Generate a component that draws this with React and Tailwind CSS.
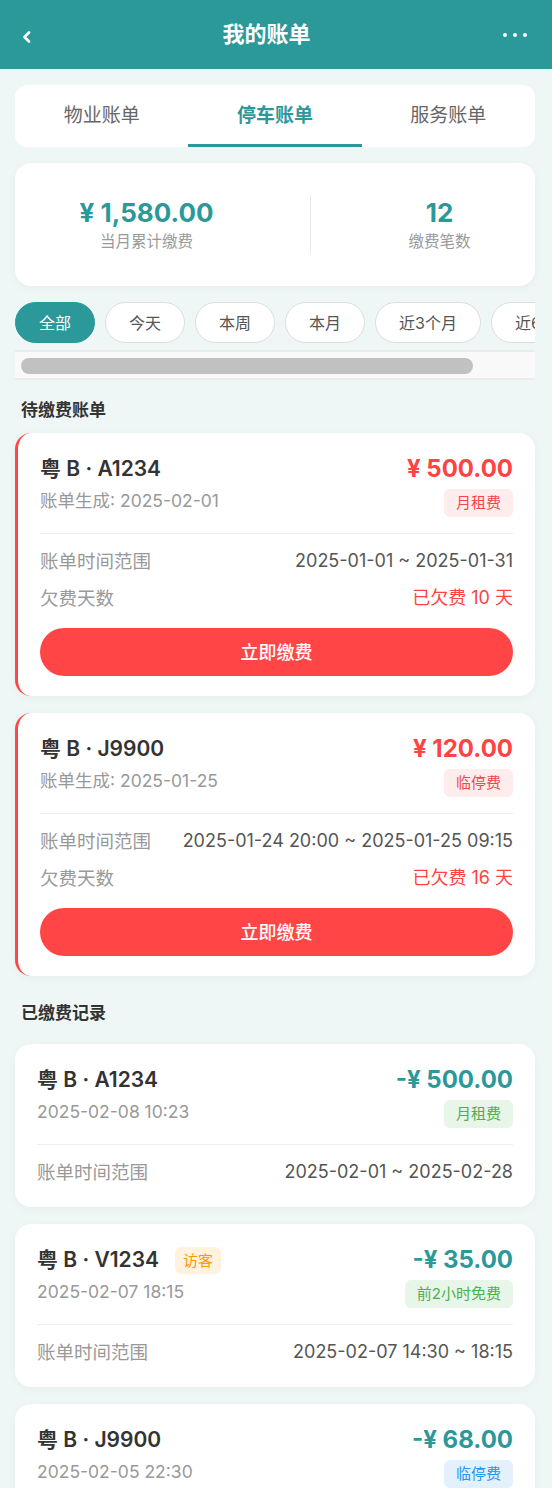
import { useState } from "react";

const tabs = ["物业账单", "停车账单", "服务账单"];
const ranges = ["全部", "今天", "本周", "本月", "近3个月", "近6个月", "近1年"];

const pending = [
    { plate: "粤 B · A1234", gen: "2025-02-01", amount: "¥ 500.00", tag: "月租费", range: "2025-01-01 ~ 2025-01-31", days: 10 },
    { plate: "粤 B · J9900", gen: "2025-01-25", amount: "¥ 120.00", tag: "临停费", range: "2025-01-24 20:00 ~ 2025-01-25 09:15", days: 16 },
];

const paid = [
    { plate: "粤 B · A1234", time: "2025-02-08 10:23", amount: "-¥ 500.00", tag: "月租费", tone: "green", range: "2025-02-01 ~ 2025-02-28" },
    { plate: "粤 B · V1234", visitor: true, time: "2025-02-07 18:15", amount: "-¥ 35.00", tag: "前2小时免费", tone: "green", range: "2025-02-07 14:30 ~ 18:15" },
    { plate: "粤 B · J9900", time: "2025-02-05 22:30", amount: "-¥ 68.00", tag: "临停费", tone: "blue", range: "2025-02-05 18:00 ~ 22:30" },
];

const toneClass = {
    green: "bg-[#e8f5e9] text-[#4caf50]",
    blue: "bg-[#e3f0fd] text-[#2196f3]",
};

function Row({ label, children }) {
    return (
        <div className="flex justify-between items-center leading-[26px] text-[18px] whitespace-nowrap">
            <span className="text-[#999] text-[18.5px]">{label}</span>
            {children}
        </div>
    );
}

function PendingCard({ bill }) {
    return (
        <div className="ml-[15px] mr-[17px] bg-white rounded-2xl border-l-[3px] border-[#ff4545] px-[22px] pt-[22px] pb-[20px] shadow-[0_2px_10px_rgba(0,0,0,0.04)]">
            <div className="flex justify-between items-start">
                <div>
                    <div className="text-[21px] font-semibold leading-[28px] text-[#333]">{bill.plate}</div>
                    <div className="mt-[6px] text-[17.5px] leading-[24px] text-[#999]">账单生成: {bill.gen}</div>
                </div>
                <div className="flex flex-col items-end">
                    <div className="text-[24px] font-bold leading-[28px] text-[#ff4242]">{bill.amount}</div>
                    <div className="mt-[6px] h-[28px] px-3 rounded-md bg-[#ffecec] text-[#f04848] text-[15px] leading-[28px]">{bill.tag}</div>
                </div>
            </div>
            <div className="mt-[16px] h-px bg-[#eeeeee]" />
            <div className="mt-[14px] flex flex-col gap-[11px]">
                <Row label="账单时间范围">
                    <span className="text-[#555]">{bill.range}</span>
                </Row>
                <Row label="欠费天数">
                    <span className="text-[#ff4242]">已欠费 {bill.days} 天</span>
                </Row>
            </div>
            <button className="mt-[17px] w-full h-[48px] rounded-full bg-[#ff4545] text-white text-[18px] font-medium">
                立即缴费
            </button>
        </div>
    );
}

function PaidCard({ bill }) {
    return (
        <div className="ml-[15px] mr-[17px] bg-white rounded-2xl px-[22px] pt-[22px] pb-[22px] shadow-[0_2px_10px_rgba(0,0,0,0.04)]">
            <div className="flex justify-between items-start">
                <div>
                    <div className="flex items-center h-[28px]">
                        <span className="text-[21px] font-semibold leading-[28px] text-[#333]">{bill.plate}</span>
                        {bill.visitor && (
                            <span className="ml-4 h-[27px] px-2 rounded-md bg-[#fff3e0] text-[#ff9800] text-[15px] leading-[27px]">访客</span>
                        )}
                    </div>
                    <div className="mt-[6px] text-[17.5px] leading-[24px] text-[#999]">{bill.time}</div>
                </div>
                <div className="flex flex-col items-end">
                    <div className="text-[24px] font-bold leading-[28px] text-[#2b9999]">{bill.amount}</div>
                    <div className={"mt-[6px] h-[28px] px-3 rounded-md text-[15px] leading-[28px] " + toneClass[bill.tone]}>{bill.tag}</div>
                </div>
            </div>
            <div className="mt-[16px] h-px bg-[#eeeeee]" />
            <div className="mt-[14px]">
                <Row label="账单时间范围">
                    <span className="text-[#555]">{bill.range}</span>
                </Row>
            </div>
        </div>
    );
}

export default function App() {
    const [tab, setTab] = useState(1);
    const [range, setRange] = useState(0);

    return (
        <div className="min-h-screen bg-[#eff7f6] pb-8 font-['Inter','Noto_Sans_CJK_SC',sans-serif]">
            {/* header */}
            <div className="h-[69px] bg-[#2b9999] flex items-center pl-[22px] pr-[25px]">
                <div className="w-[20px] pt-1">
                    <svg width="9" height="12" viewBox="0 0 9 12" fill="none">
                        <path d="M7 1.5L2.5 6L7 10.5" stroke="white" strokeWidth="2.6" strokeLinecap="round" strokeLinejoin="round" />
                    </svg>
                </div>
                <div className="flex-1 text-center text-white text-[22px] font-bold">我的账单</div>
                <div className="w-[36px] flex justify-end gap-[6px]">
                    <span className="w-[4px] h-[4px] rounded-full bg-white" />
                    <span className="w-[4px] h-[4px] rounded-full bg-white" />
                    <span className="w-[4px] h-[4px] rounded-full bg-white" />
                </div>
            </div>

            {/* tabs */}
            <div className="ml-[15px] mr-[17px] mt-4 h-[62px] bg-white rounded-xl overflow-hidden flex">
                {tabs.map((t, i) => (
                    <button
                        key={t}
                        onClick={() => setTab(i)}
                        className={
                            i === tab
                                ? "flex-1 flex items-center justify-center border-y-[3px] border-t-transparent border-b-[#2b9999] text-[#2b9999] text-[19px] font-semibold"
                                : "flex-1 flex items-center justify-center border-y-[3px] border-transparent text-[#666] text-[19px]"
                        }
                    >
                        {t}
                    </button>
                ))}
            </div>

            {/* summary */}
            <div className="ml-[15px] mr-[17px] mt-4 h-[123px] bg-white rounded-2xl px-4 flex items-center justify-around shadow-[0_2px_10px_rgba(0,0,0,0.04)]">
                <div className="text-center">
                    <div className="text-[26px] font-bold leading-[32px] text-[#2b9999]">¥ 1,580.00</div>
                    <div className="mt-[2px] text-[15.5px] leading-[22px] text-[#999]">当月累计缴费</div>
                </div>
                <div className="w-px h-[59px] bg-[#e8e8e8]" />
                <div className="text-center">
                    <div className="text-[26px] font-bold leading-[32px] text-[#2b9999]">12</div>
                    <div className="mt-[2px] text-[15.5px] leading-[22px] text-[#999]">缴费笔数</div>
                </div>
            </div>

            {/* range chips */}
            <div className="ml-[15px] mr-[17px] mt-4 overflow-hidden">
                <div className="flex gap-[10px] w-max pb-[7px]">
                    {ranges.map((r, i) => (
                        <button
                            key={r}
                            onClick={() => setRange(i)}
                            className={
                                i === range
                                    ? "h-[41px] px-[23px] rounded-full border border-[#2b9999] bg-[#2b9999] text-white text-[16px]"
                                    : "h-[41px] px-[23px] rounded-full border border-[#dddddd] bg-white text-[#555] text-[16px]"
                            }
                        >
                            {r}
                        </button>
                    ))}
                </div>
                <div className="h-[30px] border-y-2 border-[#ebebeb] bg-[#f9f9f9] pt-[6px] pl-[6px]">
                    <div className="w-[452px] h-4 rounded-full bg-[#c1c1c1]" />
                </div>
            </div>

            <div className="mt-[18px] mb-[11px] pl-[21px] text-[17px] font-bold leading-[24px] text-[#333]">待缴费账单</div>
            <div className="flex flex-col gap-[17px]">
                {pending.map((b) => (
                    <PendingCard key={b.plate} bill={b} />
                ))}
            </div>

            <div className="mt-[25px] mb-[19px] pl-[21px] text-[17px] font-bold leading-[24px] text-[#333]">已缴费记录</div>
            <div className="flex flex-col gap-[17px]">
                {paid.map((b) => (
                    <PaidCard key={b.time} bill={b} />
                ))}
            </div>
        </div>
    );
}
